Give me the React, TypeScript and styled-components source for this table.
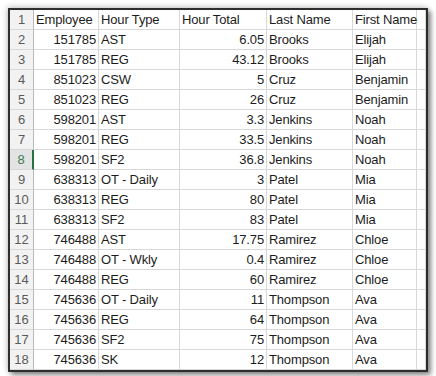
import React from 'react';
import styled, { createGlobalStyle } from 'styled-components';

const GlobalStyle = createGlobalStyle`
  html, body {
    margin: 0;
    padding: 0;
    background: #ffffff;
  }
`;

const Page = styled.div`
  width: 436px;
  height: 376px;
  padding: 8px;
  box-sizing: border-box;
  background: #ffffff;
`;

const Frame = styled.div`
  width: 420px;
  border: 2px solid #2e2e2e;
  box-sizing: border-box;
  background: #ffffff;
  box-shadow: 3px 3px 5px rgba(0, 0, 0, 0.45), -1px -1px 6px rgba(0, 0, 0, 0.22);
`;

const Sheet = styled.div`
  display: grid;
  grid-template-columns: 24px 65px 81px 87px 86px 64px 1fr;
  grid-auto-rows: 20px;
  font-family: 'Liberation Sans', Arial, sans-serif;
  font-size: 13px;
  letter-spacing: -0.15px;
  color: #1c1c1c;
`;

const RowHead = styled.div<{ $active?: boolean }>`
  display: flex;
  align-items: center;
  justify-content: center;
  background: ${(p) => (p.$active ? '#e3e3e3' : '#f2f2f2')};
  color: ${(p) => (p.$active ? '#3f7d5a' : '#5a5a5a')};
  border-bottom: 1px solid #d8d8d8;
  border-right: ${(p) => (p.$active ? '2px solid #217346' : '1px solid #b9b9b9')};
  box-sizing: border-box;
  font-size: 13px;
  letter-spacing: 0;
`;

const Cell = styled.div<{ $num?: boolean }>`
  display: flex;
  align-items: center;
  justify-content: ${(p) => (p.$num ? 'flex-end' : 'flex-start')};
  padding: ${(p) => (p.$num ? '0 2px 0 0' : '0 0 0 2px')};
  border-right: 1px solid #d8d8d8;
  border-bottom: 1px solid #d8d8d8;
  box-sizing: border-box;
  white-space: nowrap;
  min-width: 0;
`;

type Row = [string, string, string, string, string];

const header: Row = ['Employee', 'Hour Type', 'Hour Total', 'Last Name', 'First Name'];

const rows: Row[] = [
  ['151785', 'AST', '6.05', 'Brooks', 'Elijah'],
  ['151785', 'REG', '43.12', 'Brooks', 'Elijah'],
  ['851023', 'CSW', '5', 'Cruz', 'Benjamin'],
  ['851023', 'REG', '26', 'Cruz', 'Benjamin'],
  ['598201', 'AST', '3.3', 'Jenkins', 'Noah'],
  ['598201', 'REG', '33.5', 'Jenkins', 'Noah'],
  ['598201', 'SF2', '36.8', 'Jenkins', 'Noah'],
  ['638313', 'OT - Daily', '3', 'Patel', 'Mia'],
  ['638313', 'REG', '80', 'Patel', 'Mia'],
  ['638313', 'SF2', '83', 'Patel', 'Mia'],
  ['746488', 'AST', '17.75', 'Ramirez', 'Chloe'],
  ['746488', 'OT - Wkly', '0.4', 'Ramirez', 'Chloe'],
  ['746488', 'REG', '60', 'Ramirez', 'Chloe'],
  ['745636', 'OT - Daily', '11', 'Thompson', 'Ava'],
  ['745636', 'REG', '64', 'Thompson', 'Ava'],
  ['745636', 'SF2', '75', 'Thompson', 'Ava'],
  ['745636', 'SK', '12', 'Thompson', 'Ava'],
];

export default function App() {
  return (
    <>
      <GlobalStyle />
      <Page>
        <Frame>
          <Sheet>
            <RowHead>1</RowHead>
            {header.map((h) => (
              <Cell key={h}>{h}</Cell>
            ))}
            <Cell />
            {rows.map((r, i) => (
              <React.Fragment key={i}>
                <RowHead $active={i + 2 === 8}>{i + 2}</RowHead>
                <Cell $num>{r[0]}</Cell>
                <Cell>{r[1]}</Cell>
                <Cell $num>{r[2]}</Cell>
                <Cell>{r[3]}</Cell>
                <Cell>{r[4]}</Cell>
                <Cell />
              </React.Fragment>
            ))}
          </Sheet>
        </Frame>
      </Page>
    </>
  );
}
